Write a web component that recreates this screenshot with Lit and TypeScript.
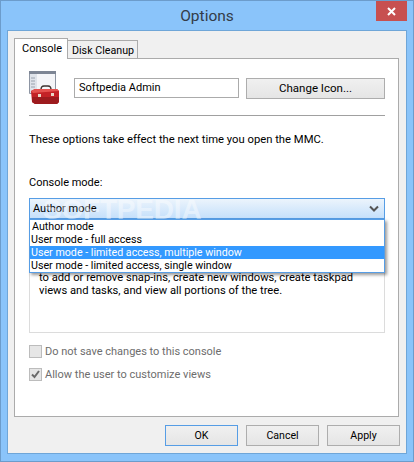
import { LitElement, html, css } from "lit";
import { customElement } from "lit/decorators.js";

@customElement("app-root")
export class AppRoot extends LitElement {
  static styles = css`
    :host { display: block; width: 414px; height: 462px; font: 11px/13px Roboto, Lato, sans-serif; color: #000; }
    * { box-sizing: border-box; }
    .win { width: 414px; height: 462px; background: #8ac4fa; border: 1px solid #6c9ccb; padding: 0 6px 7px 6px; display: flex; flex-direction: column; }
    .title { height: 29px; display: flex; align-items: center; justify-content: center; position: relative; font-size: 15.5px; color: #333c48; padding-top: 1px; }
    .close { position: absolute; right: 0; top: 0; width: 31px; height: 20px; background: #c75050; display: flex; align-items: center; justify-content: center; }
    .client { flex: 1; background: #f0f0f0; border: 1px solid #6fa6d8; padding: 7px 7px 0 6px; display: flex; flex-direction: column; }
    .tabs { display: flex; align-items: flex-end; height: 21px; position: relative; z-index: 1; }
    .tab { border: 1px solid #ababab; background: #f0f0f0; padding: 0 0 0 4px; height: 19px; line-height: 19px; white-space: nowrap; margin-left: -1px; width: 71px; font-size: 10.7px; }
    .tab.on { background: #fff; border-bottom: none; height: 21px; width: 54px; margin-left: 0; padding: 0 0 0 7px; line-height: 19px; position: relative; z-index: 1; font-size: 11px; }
    .panel { height: 359px; margin-top: -1px; background: #fff; border: 1px solid #ababab; padding: 13px 11px 0 14px; display: flex; flex-direction: column; position: relative; }
    .head { display: flex; align-items: center; height: 32px; }
    .icon { width: 32px; height: 34px; flex: none; }
    .name { width: 165px; height: 20px; margin-left: 13px; border: 1px solid #ababab; padding-left: 4px; line-height: 18px; }
    .btn { height: 21px; border: 1px solid #adadad; background: linear-gradient(#f0f0f0, #e5e5e5); display: flex; align-items: center; justify-content: center; }
    .change { width: 139px; margin-left: 7px; font-size: 11.5px; }
    hr { border: 0; height: 1px; background: #a0a0a0; margin: 11px 0 0 0; width: 356px; }
    .info { margin-top: 17px; font-size: 11.25px; }
    .label { margin-top: 30px; }
    .combo { margin-top: 9px; width: 356px; height: 21px; border: 1px solid #569de5; background: linear-gradient(#ecf4fc, #c5e0fb); display: flex; align-items: center; justify-content: space-between; padding: 0 5px 0 3px; position: relative; }
    .wm { position: absolute; left: 13px; top: 0; font: 700 28px/22px "Liberation Sans", sans-serif; color: rgba(255,255,255,.42); letter-spacing: -.2px; white-space: nowrap; pointer-events: none; }
    .list { position: absolute; left: -1px; top: 20px; width: 356px; background: #fff; border: 1px solid #569de5; box-shadow: 2px 2px 3px rgba(0,0,0,.4); z-index: 2; font-size: 10.7px; }
    .item { height: 13px; padding-left: 1px; line-height: 13px; white-space: nowrap; }
    .item:first-child { padding-left: 2px; }
    .item.sel { background: #3399ff; color: #fff; }
    .desc { width: 356px; height: 114px; border: 1px solid #dcdcdc; border-top: none; padding: 52px 0 0 9px; font-size: 11.2px; }
    .check { display: flex; align-items: center; gap: 3px; color: #6d6d6d; height: 13px; }
    .first { margin-top: 12px; }
    .second { margin-top: 10px; }
    .box { width: 13px; height: 13px; border: 1px solid #bcbcbc; background: #e6e6e6; flex: none; display: block; }
    .foot { display: flex; justify-content: flex-end; gap: 8px; margin-top: 8px; margin-right: -1px; font-size: 10.6px; }
    .foot .btn { width: 73px; height: 21px; }
    .foot .ok { border-color: #569de5; }
  `;

  render() {
    return html`
      <div class="win">
        <div class="title">Options
          <div class="close">
            <svg width="9" height="9" viewBox="0 0 9 9"><path d="M1 1l7 7M8 1l-7 7" stroke="#fff" stroke-width="2"/></svg>
          </div>
        </div>
        <div class="client">
          <div class="tabs"><div class="tab on">Console</div><div class="tab">Disk Cleanup</div></div>
          <div class="panel">
            <div class="head">
              <svg class="icon" viewBox="0 0 32 34">
                <path d="M.5.500h26v22H.5z" fill="#f4f5f8" stroke="#8d95a3"/>
                <path d="M0 0h27v3H0z" fill="#7d8594"/>
                <path d="M1 3h7v19H1z" fill="#dfe3ea"/>
                <path d="M2 7h4M2 10h4M2 13h4M2 16h4" stroke="#9aa2ae"/>
                <path d="M12 19c0-3.500 1-4 3-4h4c2 0 3 .5 3 4" fill="none" stroke="#3d3330" stroke-width="1.500"/>
                <path d="M2 20l4-2h22l2 2v11l-2 2H6l-3-2z" fill="#c32226"/>
                <path d="M2 20l4-2h22l2 2-26 2z" fill="#e5514e"/>
                <path d="M3 26h27v5l-2 2H6l-3-2z" fill="#9d1b1e"/>
                <path d="M9 23h3v3H9zM22 22h3v3h-3z" fill="#e8d9c8"/>
              </svg>
              <div class="name">Softpedia Admin</div>
              <div class="btn change">Change Icon...</div>
            </div>
            <hr />
            <div class="info">These options take effect the next time you open the MMC.</div>
            <div class="label">Console mode:</div>
            <div class="combo">
              <div class="wm">SOFTPEDIA</div>
              <span>Author mode</span>
              <svg width="10" height="8" viewBox="0 0 10 8"><path d="M1 1.500l4 4 4-4" fill="none" stroke="#555" stroke-width="2"/></svg>
              <div class="list">
                <div class="item">Author mode</div>
                <div class="item">User mode - full access</div>
                <div class="item sel">User mode - limited access, multiple window</div>
                <div class="item">User mode - limited access, single window</div>
              </div>
            </div>
            <div class="desc">
              <div>to add or remove snap-ins, create new windows, create taskpad</div>
              <div>views and tasks, and view all portions of the tree.</div>
            </div>
            <div class="check first"><span class="box"></span>Do not save changes to this console</div>
            <div class="check second">
              <svg class="box" viewBox="0 0 11 11"><path d="M2 5.500l2.500 2.500L9 2" fill="none" stroke="#6a6a6a" stroke-width="2"/></svg>
              Allow the user to customize views
            </div>
          </div>
          <div class="foot">
            <div class="btn ok">OK</div><div class="btn">Cancel</div><div class="btn">Apply</div>
          </div>
        </div>
      </div>
    `;
  }
}
